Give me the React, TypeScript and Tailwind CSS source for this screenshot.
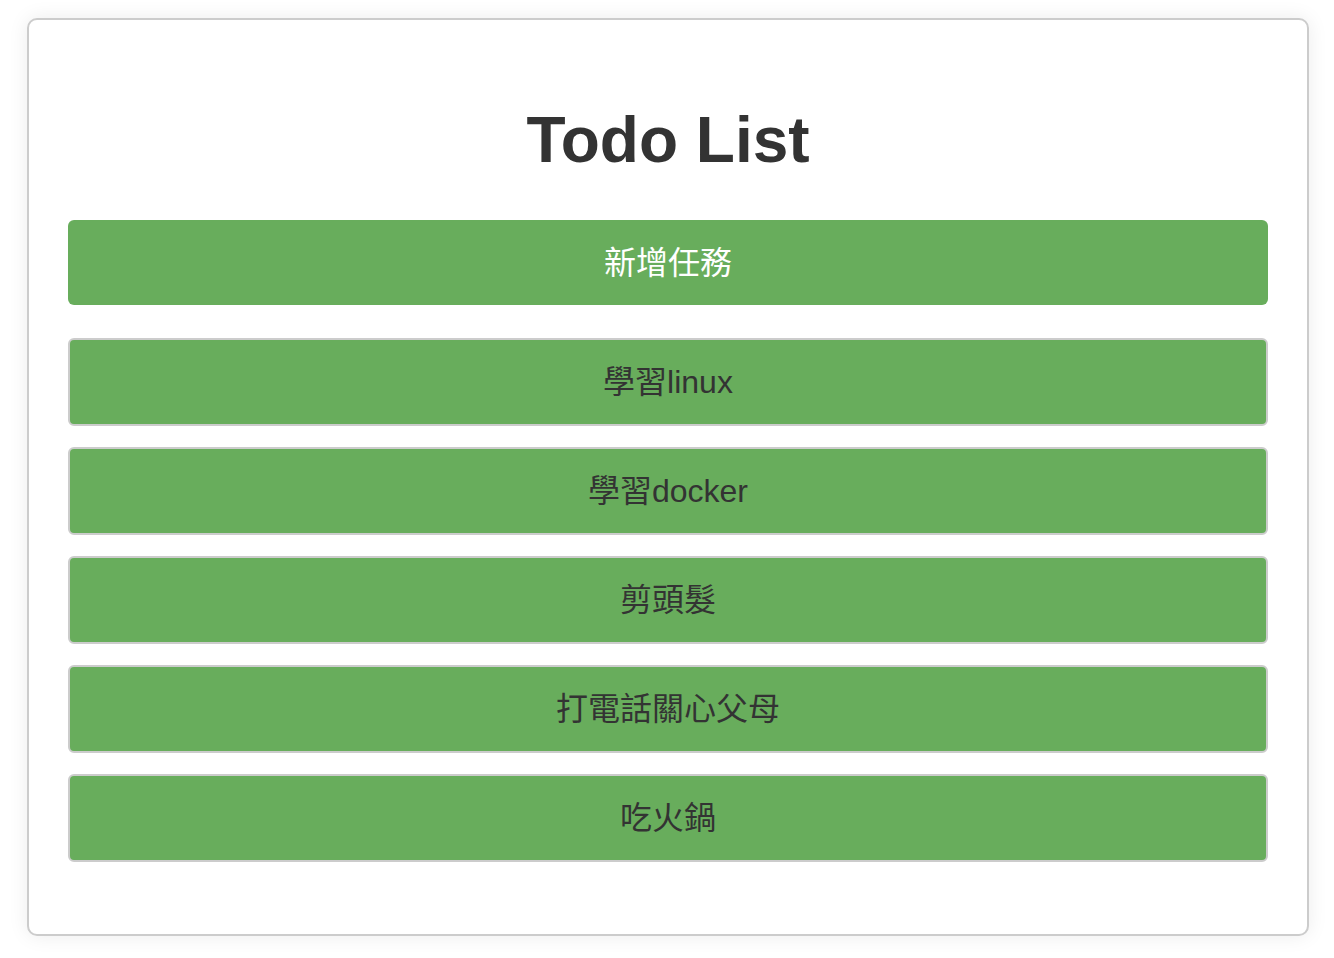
const todos = ["學習linux", "學習docker", "剪頭髮", "打電話關心父母", "吃火鍋"];

export default function App() {
  return (
    <div
      className="min-h-screen bg-white pt-[18px] pl-[27px]"
      style={{ fontFamily: '"Liberation Sans", Arial, "Noto Sans CJK TC", sans-serif' }}
    >
      <div className="w-[1282px] rounded-[10px] border-2 border-[#cccccc] bg-white px-[39px] pt-[88px] pb-[72px] shadow-[0_0_20px_rgba(0,0,0,0.08)]">
        <h1 className="h-[64px] text-center text-[64px] font-bold leading-[64px] text-[#333333]">
          Todo List
        </h1>
        <button className="mt-[48px] flex h-[85px] w-full items-center justify-center rounded-[6px] bg-[#68ad5c] text-[32px] text-white">
          新增任務
        </button>
        <ul className="mt-[33px] flex flex-col gap-[21px]">
          {todos.map((todo) => (
            <li
              key={todo}
              className="flex h-[88px] items-center justify-center rounded-[6px] border-2 border-[#cccccc] bg-[#68ad5c] text-[32px] text-[#333333]"
            >
              {todo}
            </li>
          ))}
        </ul>
      </div>
    </div>
  );
}
